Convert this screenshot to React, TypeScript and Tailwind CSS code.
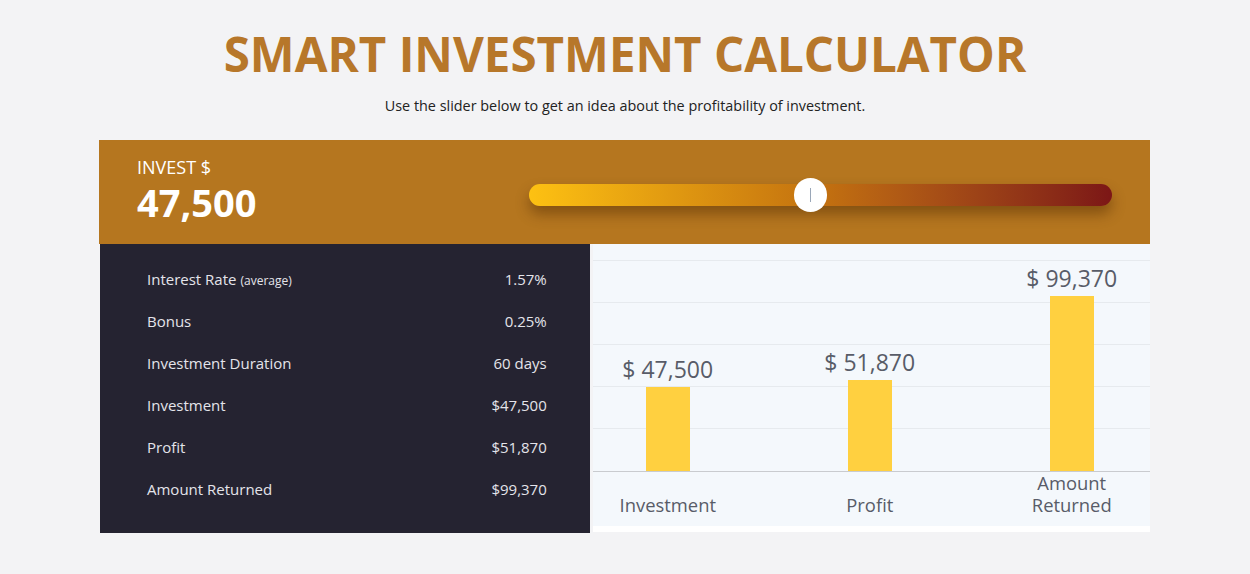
const rows = [
  { label: 'Interest Rate', note: '(average)', value: '1.57%' },
  { label: 'Bonus', value: '0.25%' },
  { label: 'Investment Duration', value: '60 days' },
  { label: 'Investment', value: '$47,500' },
  { label: 'Profit', value: '$51,870' },
  { label: 'Amount Returned', value: '$99,370' },
]

const bars = [
  { name: 'Investment', amount: 47500 },
  { name: 'Profit', amount: 51870 },
  { name: 'Amount Returned', amount: 99370 },
]

const fmt = (n: number) => n.toLocaleString('en-US')

export default function App() {
  const max = 99370
  return (
    <div className="min-h-screen bg-[#f3f3f5] font-['Open_Sans',sans-serif] pt-[24px]">
      <h1 className="text-center text-[47.5px] leading-[60px] font-bold text-[#b7772a]">
        SMART INVESTMENT CALCULATOR
      </h1>
      <p className="text-center text-[14.4px] leading-[20px] text-[#222] mt-[12px]">
        Use the slider below to get an idea about the profitability of investment.
      </p>

      <div className="w-[1051px] ml-[99px] mt-[24px]">
        {/* header band */}
        <div className="h-[104px] bg-[#b5761f] flex items-center pl-[38px] pr-[38px]">
          <div className="w-[392px] -mt-[4px]">
            <div className="text-white text-[18px] leading-[24px]">INVEST $</div>
            <div className="text-white text-[38px] leading-[46px] font-bold">47,500</div>
          </div>
          <div className="relative flex-1 h-[22px] mt-[6px]">
            <div className="h-full rounded-full bg-gradient-to-r from-[#fdc112] via-[#c3710f] to-[#7c1616] shadow-[0_8px_14px_rgba(70,35,0,0.45)]" />
            <div className="absolute left-[265px] top-[-6px] w-[33px] h-[34px] rounded-full bg-white flex items-center justify-center">
              <div className="w-[1px] h-[14px] bg-[#9aa7b8]" />
            </div>
          </div>
        </div>

        <div className="flex">
          {/* details */}
          <div className="w-[491px] h-[289px] bg-[#252331] ml-[1px] pt-[14px] pl-[47px] pr-[43px]">
            {rows.map((r) => (
              <div key={r.label} className="h-[42px] flex items-center justify-between text-[#e4e4ea] text-[15px]">
                <span>
                  {r.label}
                  {r.note && <span className="text-[12px] ml-[4px]">{r.note}</span>}
                </span>
                <span>{r.value}</span>
              </div>
            ))}
          </div>

          {/* chart */}
          <div className="w-[559px] h-[288px] ml-[3px] bg-white">
            <div className="h-[282px] bg-[#f4f8fc] flex flex-col">
              <div className="relative h-[230px] border-b border-[#c9cbcf]">
                <div className="absolute inset-0 pt-[16px]">
                  {[0, 1, 2, 3, 4].map((i) => (
                    <div key={i} className="h-[42px] border-t border-[#e6eaee]" />
                  ))}
                </div>
                <div className="relative h-full flex items-end gap-[52px]">
                  {bars.map((b) => (
                    <div key={b.name} className="w-[150px] flex flex-col items-center">
                      <div className="text-[23px] leading-[26px] text-[#585c68] mb-[5px] whitespace-nowrap">$ {fmt(b.amount)}</div>
                      <div className="w-[44px] bg-[#ffd040]" style={{ height: Math.round((b.amount / max) * 175) }} />
                    </div>
                  ))}
                </div>
              </div>
              <div className="flex-1 flex items-end gap-[52px] pb-[10px]">
                {bars.map((b) => (
                  <div key={b.name} className="w-[150px] text-center text-[18.4px] leading-[22px] text-[#585c68]">
                    {b.name === 'Amount Returned' ? (
                      <>
                        Amount
                        <br />
                        Returned
                      </>
                    ) : (
                      b.name
                    )}
                  </div>
                ))}
              </div>
            </div>
          </div>
        </div>
      </div>
    </div>
  )
}
